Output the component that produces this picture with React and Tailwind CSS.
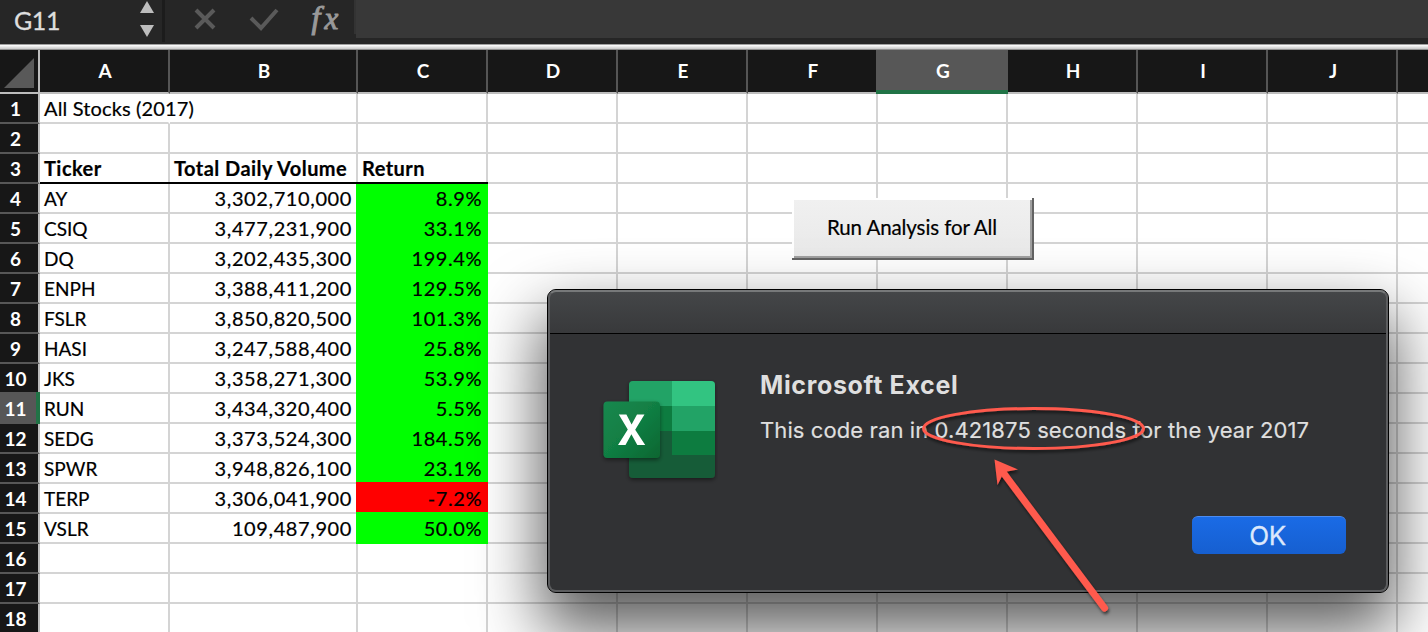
const cols = [
  { name: "A", w: "w-[130px]" },
  { name: "B", w: "w-[188px]" },
  { name: "C", w: "w-[130px]" },
  { name: "D", w: "w-[130px]" },
  { name: "E", w: "w-[130px]" },
  { name: "F", w: "w-[130px]" },
  { name: "G", w: "w-[130px]" },
  { name: "H", w: "w-[130px]" },
  { name: "I", w: "w-[130px]" },
  { name: "J", w: "w-[130px]" },
  { name: "", w: "w-[130px]" },
];

const data = {
  1: ["All Stocks (2017)"],
  3: ["Ticker", "Total Daily Volume", "Return"],
  4: ["AY", "3,302,710,000", "8.9%"],
  5: ["CSIQ", "3,477,231,900", "33.1%"],
  6: ["DQ", "3,202,435,300", "199.4%"],
  7: ["ENPH", "3,388,411,200", "129.5%"],
  8: ["FSLR", "3,850,820,500", "101.3%"],
  9: ["HASI", "3,247,588,400", "25.8%"],
  10: ["JKS", "3,358,271,300", "53.9%"],
  11: ["RUN", "3,434,320,400", "5.5%"],
  12: ["SEDG", "3,373,524,300", "184.5%"],
  13: ["SPWR", "3,948,826,100", "23.1%"],
  14: ["TERP", "3,306,041,900", "-7.2%"],
  15: ["VSLR", "109,487,900", "50.0%"],
};

const rows = Array.from({ length: 18 }, (_, i) => i + 1);

function FormulaBar() {
  return (
    <div className="flex h-11 shrink-0 bg-[#262626]">
      <div className="flex w-[162px] items-start justify-between pl-[14px] pr-2">
        <span className="pt-[7px] text-[25px] leading-[26px] tracking-[-0.4px] text-[#dedede] [-webkit-text-stroke:0.3px]">G11</span>
        <svg width="14" height="44" viewBox="0 0 14 44" fill="#bdbdbd">
          <path d="M7 1L14 13H0z" />
          <path d="M0 25H14L7 37z" />
        </svg>
      </div>
      <div className="h-[42px] w-[3px] bg-[#1c1c1c]" />
      <svg width="189" height="44" viewBox="165 0 189 44" fill="none" stroke="#5a5a5a" strokeWidth="4">
        <path d="M196 10L214 28M214 10L196 28" />
        <path d="M251 18L261 28L277 10" />
        <text x="311.500" y="27.500" fill="#999999" stroke="#999999" strokeWidth="1" fontFamily="Liberation Serif, serif" fontStyle="italic" fontSize="32">f</text>
        <text x="324.500" y="29" fill="#999999" stroke="#999999" strokeWidth="1" fontFamily="Liberation Serif, serif" fontStyle="italic" fontSize="31">x</text>
      </svg>
      <div className="h-[34px] w-[2px] bg-[#333333]" />
      <div className="h-[38px] flex-1 bg-[#383838]" />
    </div>
  );
}

function ColumnHeaders() {
  return (
    <div className="flex h-11 w-[1528px] shrink-0 bg-[#171717] text-white">
      <div className="flex w-10 items-end border-b-2 border-r-2 border-b-[#bdbdbd] border-r-[#bdbdbd]">
        <svg width="38" height="42" viewBox="0 0 38 42">
          <path d="M34 8V38H4z" fill="#595959" />
        </svg>
      </div>
      {cols.map((c, i) => (
        <div
          key={i}
          className={
            c.name === "G"
              ? "-ml-[2px] flex w-[132px] shrink-0 justify-center border-b-4 border-[#217346] bg-[#575757] pl-[2px] pt-[9px] text-[19px] leading-6 font-bold"
              : `${c.w} flex shrink-0 justify-center border-b-2 border-r-2 border-b-[#bdbdbd] border-r-[#555555] pl-[2px] pt-[9px] text-[19px] leading-6 font-bold`
          }
        >
          {c.name}
        </div>
      ))}
    </div>
  );
}

function cellClass(row, col) {
  const line =
    row === 3 && col < 3
      ? "relative border-b-transparent after:absolute after:left-0 after:-right-[2px] after:-bottom-[2px] after:h-[2px] after:bg-black"
      : "border-b-[#d4d4d4]";
  const right = row === 1 && col === 0 ? "border-r-transparent" : "border-r-[#d4d4d4]";
  if (col === 2 && row >= 4 && row <= 15) {
    const fill = row === 14 ? "bg-[#ff0000]" : "bg-[#00ff00]";
    const place = row === 4 ? "h-[30px]" : "-mt-[2px] h-8 pt-[2px]";
    return `-ml-[2px] w-[132px] shrink-0 ${place} ${fill} pr-[6px] text-right text-[20px] leading-[28px] tracking-[0.55px]`;
  }
  let text = "pl-1 text-[19px] leading-[30px]";
  if (row === 1) text = "pl-1 text-[20px] leading-[28px] tracking-[0.15px]";
  if (row === 3) text = "pl-1 text-[20px] leading-[28px] font-bold tracking-[0.45px]";
  if (col === 1 && row >= 4) text = "text-right pr-1 text-[20px] leading-[28px] tracking-[0.6px]";
  return `${cols[col].w} h-[30px] shrink-0 border-b-2 border-r-2 ${line} ${right} ${text}`;
}

function Row({ n }) {
  const active = n === 11;
  return (
    <div className="flex h-[30px] w-[1528px] shrink-0 leading-[30px] whitespace-nowrap">
      <div
        className={
          active
            ? "-mt-[2px] h-8 w-10 shrink-0 border-r-4 border-r-[#217346] bg-[#575757] pt-[2px] pr-[5px] text-center text-[19px] font-bold text-white"
            : "h-[30px] w-10 shrink-0 border-b-2 border-r-2 border-b-[#575757] border-r-[#bdbdbd] bg-[#171717] pr-[7px] text-center text-[19px] font-bold text-white"
        }
      >
        {n}
      </div>
      {cols.map((c, i) => (
        <div key={i} className={`${cellClass(n, i)} [-webkit-text-stroke:0.2px]`}>
          {data[n]?.[i] ?? ""}
        </div>
      ))}
    </div>
  );
}

function ExcelIcon() {
  return (
    <svg className="absolute left-[50px] top-[85px]" width="120" height="112" viewBox="598 375 120 112">
      <defs>
        <clipPath id="sheet"><rect x="629" y="381" width="86" height="97" rx="4" /></clipPath>
        <linearGradient id="tile" x1="0" y1="0" x2="1" y2="1">
          <stop offset="0" stopColor="#18884f" />
          <stop offset="0.5" stopColor="#117e43" />
          <stop offset="1" stopColor="#0b6631" />
        </linearGradient>
        <filter id="soft" x="-20%" y="-20%" width="150%" height="150%">
          <feDropShadow dx="0" dy="2" stdDeviation="2" floodOpacity="0.45" />
        </filter>
      </defs>
      <g filter="url(#soft)">
        <g clipPath="url(#sheet)">
          <path fill="#185c37" d="M629 381h86v97h-86z" />
          <path fill="#21a366" d="M629 381h43v25h-43zM672 406h43v25h-43z" />
          <path fill="#33c481" d="M672 381h43v25h-43z" />
          <path fill="#107c41" d="M629 406h43v25h-43zM672 431h43v24h-43z" />
        </g>
      </g>
      <rect x="603.500" y="401.500" width="56.500" height="56.500" rx="4" fill="url(#tile)" filter="url(#soft)" />
      <path fill="#ffffff" d="M618 445L627.800 429.600L618.800 414.400H626.400L631.600 424.600L637 414.400H644.500L635.200 429.700L645.200 445H637.300L631.400 434.300L625.500 445z" />
    </svg>
  );
}

function Dialog() {
  return (
    <div className="absolute left-[547px] top-[289px] h-[304px] w-[842px] rounded-[9px] border border-black bg-[#313234] font-[Inter,sans-serif] text-[#dfdfdf] shadow-[0_32px_64px_6px_rgba(0,0,0,0.64)]">
      <div className="h-[44px] rounded-t-[8px] border-b border-black bg-linear-to-b from-[#454749] to-[#38393b]" />
      <ExcelIcon />
      <div className="absolute left-[212px] top-[79px] text-[25px] leading-8 font-bold tracking-[0.65px] whitespace-nowrap">Microsoft Excel</div>
      <div className="absolute left-[212px] top-[124px] text-[22px] leading-8 tracking-[0.1px] whitespace-nowrap [-webkit-text-stroke:0.2px]">
        This code ran in 0.421875 seconds for the year 2017
      </div>
      <button className="absolute left-[644px] top-[226px] h-[38px] w-[154px] rounded-[6px] border-t border-[#4c8cf0] bg-linear-to-b from-[#1a6be6] to-[#165fd0] pr-[3px] text-[26px] leading-none tracking-[-0.5px] text-[#dce8fc] [-webkit-text-stroke:0.3px]">
        OK
      </button>
      <div className="pointer-events-none absolute inset-0 rounded-[8px] border-2 border-t-[#77797a] border-r-[#5c5d5f] border-b-[#5c5d5f] border-l-[#5c5d5f]" />
    </div>
  );
}

function Annotations() {
  return (
    <svg className="pointer-events-none absolute left-[900px] top-[390px]" width="270" height="242" viewBox="900 390 270 242">
      <defs>
        <filter id="mark" x="-10%" y="-10%" width="120%" height="130%">
          <feDropShadow dx="1" dy="2.500" stdDeviation="1.500" floodOpacity="0.6" />
        </filter>
      </defs>
      <g filter="url(#mark)">
        <ellipse cx="1033.500" cy="428.500" rx="110" ry="20" fill="none" stroke="#ff5a4d" strokeWidth="3" />
        <path d="M1003.500 473L1104.500 608" fill="none" stroke="#ff5a4d" strokeWidth="7" strokeLinecap="round" />
        <path d="M994.500 459.500L1018 469.500L1007 471.500L1002 476L997.500 485z" fill="#ff5a4d" />
      </g>
    </svg>
  );
}

export default function App() {
  return (
    <div className="relative flex h-[632px] w-[1428px] flex-col overflow-hidden bg-white font-[Lato,sans-serif] text-black">
      <FormulaBar />
      <div className="h-[6px] shrink-0 border-t border-b border-t-[#a0a0a0] border-b-[#909090] bg-linear-to-b from-white to-[#c8c8c8]" />
      <ColumnHeaders />
      {rows.map((n) => (
        <Row key={n} n={n} />
      ))}
      <div className="absolute left-[792px] top-[198px] h-[62px] w-[242px] border-b-2 border-r-2 border-[#636363] bg-white pl-[2px] pt-[2px]">
        <button className="h-full w-full border-b-2 border-r-2 border-[#a0a0a0] bg-linear-to-b from-[#f0f0f0] to-[#e9e9e9] pb-[2px] text-[20.5px] tracking-[-0.1px] [-webkit-text-stroke:0.2px]">
          Run Analysis for All
        </button>
      </div>
      <Dialog />
      <Annotations />
    </div>
  );
}
